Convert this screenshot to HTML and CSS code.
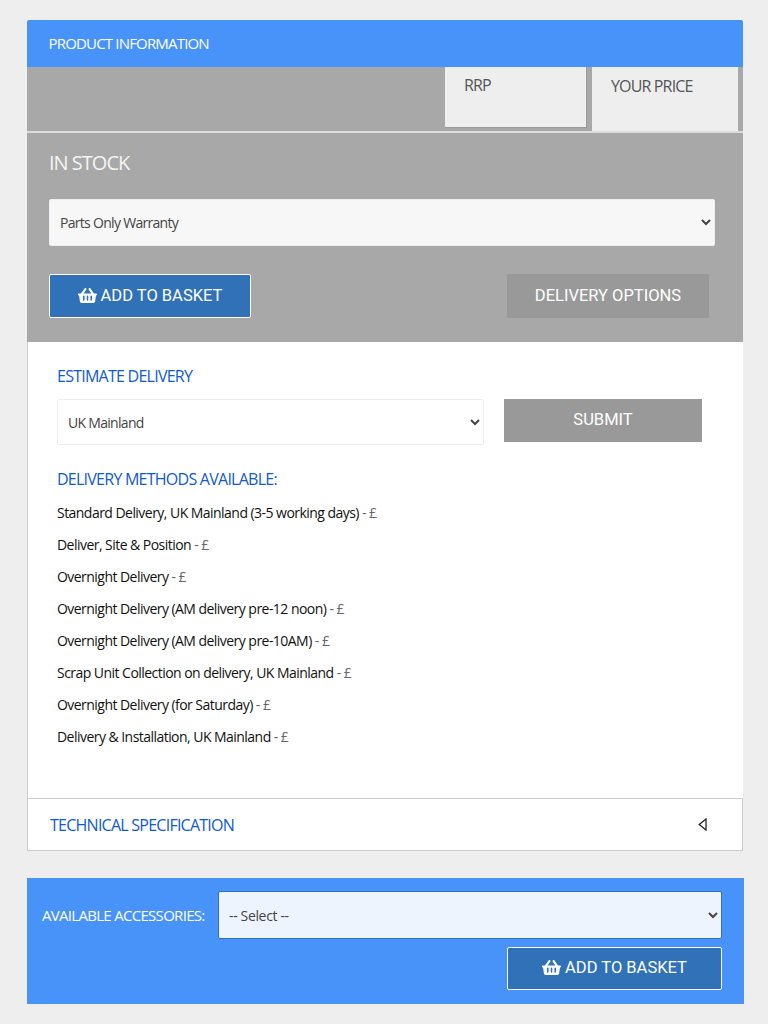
FILE: index.html
```html
<!DOCTYPE html>
<html lang="en">
<head>
    <meta charset="UTF-8">
    <meta name="viewport" content="width=device-width, initial-scale=1.0">
    <title>Product Information</title>
    <link rel="stylesheet" href="styles.css">
</head>
<body>
    <div class="container">
        <section class="product-panel">
            <h2 class="panel-header">PRODUCT INFORMATION</h2>

            <div class="price-row">
                <div class="price-box price-rrp">RRP</div>
                <div class="price-box price-yours">YOUR PRICE</div>
            </div>

            <div class="stock-section">
                <h3 class="stock-title">IN STOCK</h3>
                <select class="warranty-select">
                    <option>Parts Only Warranty</option>
                </select>
                <div class="stock-actions">
                    <button class="btn btn-basket btn-basket-main">
                        <svg class="basket-icon" viewBox="0 0 576 512"><path d="M576 216v16c0 13.255-10.745 24-24 24h-8l-26.113 182.788C514.509 462.435 494.257 480 470.37 480H105.63c-23.887 0-44.139-17.565-47.518-41.212L32 256h-8c-13.255 0-24-10.745-24-24v-16c0-13.255 10.745-24 24-24h67.341l106.78-146.821c10.395-14.292 30.407-17.453 44.701-7.058 14.293 10.395 17.453 30.408 7.058 44.701L170.477 192h235.046L326.12 82.821c-10.395-14.292-7.234-34.306 7.059-44.701 14.291-10.395 34.306-7.235 44.701 7.058L484.659 192H552c13.255 0 24 10.745 24 24zM312 392V280c0-13.255-10.745-24-24-24s-24 10.745-24 24v112c0 13.255 10.745 24 24 24s24-10.745 24-24zm112 0V280c0-13.255-10.745-24-24-24s-24 10.745-24 24v112c0 13.255 10.745 24 24 24s24-10.745 24-24zm-224 0V280c0-13.255-10.745-24-24-24s-24 10.745-24 24v112c0 13.255 10.745 24 24 24s24-10.745 24-24z"/></svg>
                        ADD TO BASKET
                    </button>
                    <button class="btn btn-grey btn-delivery">DELIVERY OPTIONS</button>
                </div>
            </div>

            <div class="delivery-section">
                <h3 class="blue-title">ESTIMATE DELIVERY</h3>
                <div class="estimate-row">
                    <select class="region-select">
                        <option>UK Mainland</option>
                    </select>
                    <button class="btn btn-grey btn-submit">SUBMIT</button>
                </div>
                <h3 class="blue-title methods-title">DELIVERY METHODS AVAILABLE:</h3>
                <ul class="methods-list">
                    <li>Standard Delivery, UK Mainland (3-5 working days) <span>- £</span></li>
                    <li>Deliver, Site &amp; Position <span>- £</span></li>
                    <li>Overnight Delivery <span>- £</span></li>
                    <li>Overnight Delivery (AM delivery pre-12 noon) <span>- £</span></li>
                    <li>Overnight Delivery (AM delivery pre-10AM) <span>- £</span></li>
                    <li>Scrap Unit Collection on delivery, UK Mainland <span>- £</span></li>
                    <li>Overnight Delivery (for Saturday) <span>- £</span></li>
                    <li>Delivery &amp; Installation, UK Mainland <span>- £</span></li>
                </ul>
            </div>

            <div class="spec-row">
                <span class="spec-title">TECHNICAL SPECIFICATION</span>
                <svg class="spec-arrow" viewBox="0 0 9 13"><path d="M8 1 L1.2 6.5 L8 12 Z"/></svg>
            </div>
        </section>

        <section class="accessories">
            <div class="accessories-row">
                <label class="accessories-label">AVAILABLE ACCESSORIES:</label>
                <select class="accessories-select">
                    <option>-- Select --</option>
                </select>
            </div>
            <button class="btn btn-basket btn-basket-small">
                <svg class="basket-icon" viewBox="0 0 576 512"><path d="M576 216v16c0 13.255-10.745 24-24 24h-8l-26.113 182.788C514.509 462.435 494.257 480 470.37 480H105.63c-23.887 0-44.139-17.565-47.518-41.212L32 256h-8c-13.255 0-24-10.745-24-24v-16c0-13.255 10.745-24 24-24h67.341l106.78-146.821c10.395-14.292 30.407-17.453 44.701-7.058 14.293 10.395 17.453 30.408 7.058 44.701L170.477 192h235.046L326.12 82.821c-10.395-14.292-7.234-34.306 7.059-44.701 14.291-10.395 34.306-7.235 44.701 7.058L484.659 192H552c13.255 0 24 10.745 24 24zM312 392V280c0-13.255-10.745-24-24-24s-24 10.745-24 24v112c0 13.255 10.745 24 24 24s24-10.745 24-24zm112 0V280c0-13.255-10.745-24-24-24s-24 10.745-24 24v112c0 13.255 10.745 24 24 24s24-10.745 24-24zm-224 0V280c0-13.255-10.745-24-24-24s-24 10.745-24 24v112c0 13.255 10.745 24 24 24s24-10.745 24-24z"/></svg>
                ADD TO BASKET
            </button>
        </section>
    </div>
</body>
</html>
```
FILE: styles.css
```css
* {
    margin: 0;
    padding: 0;
    box-sizing: border-box;
}

body {
    font-family: 'Open Sans', sans-serif;
    background: #eeeeee;
    color: #111;
    height: 1024px;
    overflow: hidden;
}

.container {
    padding: 20px 25px 0 27px;
}

.panel-header {
    height: 47px;
    padding-left: 21.5px;
    background: #4893f9;
    border-radius: 2px 2px 0 0;
    color: #fff;
    font-size: 15px;
    font-weight: 400;
    line-height: 47px;
    letter-spacing: -0.82px;
}

.price-row {
    display: flex;
    justify-content: flex-end;
    height: 64px;
    padding-right: 5px;
    background: #a8a8a8;
}

.price-box {
    background: #eeeeee;
    color: #555;
    font-size: 16px;
    letter-spacing: -0.85px;
}

.price-rrp {
    width: 142px;
    height: 61px;
    margin-right: 5px;
    padding: 7px 19px;
    border-right: 1px solid #999;
    border-bottom: 1px solid #999;
}

.price-yours {
    width: 146px;
    padding: 8px 19px;
}

.stock-section {
    height: 211px;
    padding: 17px 28px 0 22px;
    border-top: 2px solid #dcdcdc;
    background: #a8a8a8;
}

.stock-title {
    color: #f4f4f4;
    font-size: 20px;
    font-weight: 400;
    line-height: 25px;
    letter-spacing: -1px;
}

select {
    font-family: 'Open Sans', sans-serif;
    font-size: 14px;
    letter-spacing: -0.7px;
    color: #444;
    padding-left: 6px;
    border-radius: 2px;
}

.warranty-select {
    display: block;
    width: 666px;
    height: 47px;
    margin-top: 24px;
    background: #f7f7f7;
    border: 1px solid #eeeeee;
}

.stock-actions {
    display: flex;
    justify-content: space-between;
    width: 660px;
    margin-top: 28px;
}

.btn {
    padding-bottom: 2px;
    border: none;
    font-family: Roboto, sans-serif;
    color: #fff;
    font-size: 16.5px;
}

.btn-basket {
    display: flex;
    align-items: center;
    justify-content: center;
    gap: 4px;
    background: #3071b7;
    border: 1px solid #fff;
    border-radius: 2px;
}

.basket-icon {
    width: 19px;
    height: 17px;
    fill: #fff;
}

.btn-basket-main {
    width: 202px;
    height: 44px;
}

.btn-grey {
    background: #999999;
}

.btn-delivery {
    width: 202px;
    height: 44px;
}

.delivery-section {
    height: 456px;
    padding: 24px 30px 0 29px;
    background: #fff;
    border-left: 1px solid #cfcfcf;
}

.blue-title {
    color: #0f5ad0;
    font-size: 16px;
    font-weight: 400;
    line-height: 20px;
    letter-spacing: -0.75px;
}

.estimate-row {
    display: flex;
    align-items: flex-start;
    gap: 20px;
    margin-top: 13px;
}

.region-select {
    width: 427px;
    height: 46px;
    background: #fff;
    border: 1px solid #eeeeee;
}

.btn-submit {
    width: 198px;
    height: 43px;
}

.methods-title {
    margin-top: 24px;
}

.methods-list {
    list-style: none;
    margin-top: 8px;
}

.methods-list li {
    height: 32px;
    font-size: 14px;
    line-height: 32px;
    letter-spacing: -0.54px;
}

.methods-list span {
    color: #666;
}

.spec-row {
    display: flex;
    align-items: center;
    justify-content: space-between;
    height: 53px;
    padding: 0 35px 0 22px;
    background: #fff;
    border: 1px solid #cccccc;
}

.spec-title {
    color: #0f5ad0;
    font-size: 16px;
    letter-spacing: -0.75px;
}

.spec-arrow {
    width: 9px;
    height: 13px;
    fill: none;
    stroke: #222;
    stroke-width: 1.3;
}

.accessories {
    display: flex;
    flex-direction: column;
    align-items: flex-end;
    width: 717px;
    height: 126px;
    margin-top: 27px;
    padding: 13px 22px 0 15px;
    background: #4893f9;
}

.accessories-row {
    display: flex;
    align-items: center;
    justify-content: space-between;
    width: 100%;
}

.accessories-label {
    color: #fff;
    font-size: 15px;
    letter-spacing: -0.7px;
}

.accessories-select {
    width: 504px;
    height: 48px;
    background: #eef4fe;
    border: 1px solid #2f6fc0;
    letter-spacing: -0.35px;
}

.btn-basket-small {
    width: 215px;
    height: 43px;
    margin-top: 8px;
}
```
